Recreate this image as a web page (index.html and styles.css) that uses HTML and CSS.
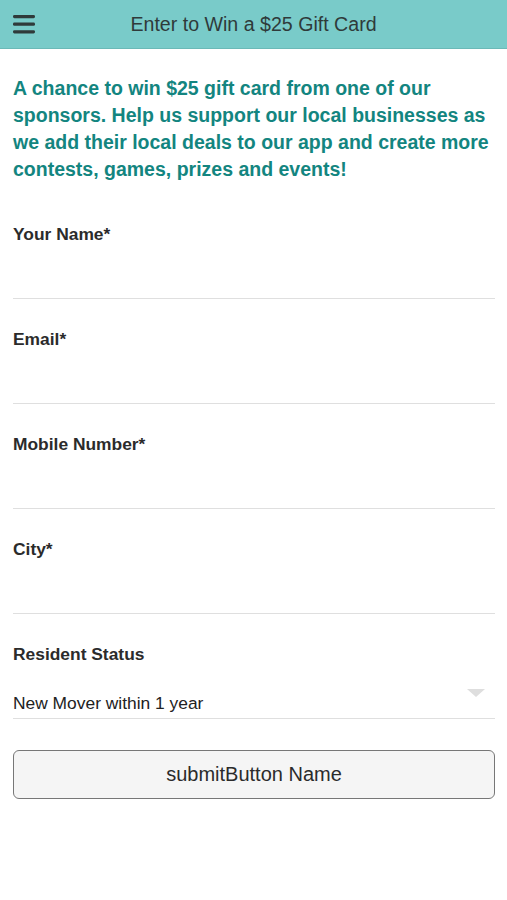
FILE: index.html
```html
<!DOCTYPE html>
<html lang="en">
<head>
  <meta charset="UTF-8">
  <meta name="viewport" content="width=device-width, initial-scale=1.0">
  <title>Enter to Win a $25 Gift Card</title>
  <link rel="stylesheet" href="styles.css">
</head>
<body>
  <header class="topbar">
    <button class="menu" aria-label="Menu">
      <svg width="22" height="19" viewBox="0 0 22 19">
        <rect x="0" y="0" width="22" height="3.2" rx="1.4" fill="#2f3a3a" />
        <rect x="0" y="7.6" width="22" height="3.2" rx="1.4" fill="#2f3a3a" />
        <rect x="0" y="15.2" width="22" height="3.2" rx="1.4" fill="#2f3a3a" />
      </svg>
    </button>
    <h1 class="topbar-title">Enter to Win a $25 Gift Card</h1>
  </header>

  <main class="content">
    <p class="intro">A chance to win $25 gift card from one of our sponsors. Help us support our local businesses as we add their local deals to our app and create more contests, games, prizes and events!</p>

    <form class="entry-form">
      <label class="field">
        <span class="field-label">Your Name*</span>
        <input type="text" class="field-input">
      </label>
      <label class="field">
        <span class="field-label">Email*</span>
        <input type="email" class="field-input">
      </label>
      <label class="field">
        <span class="field-label">Mobile Number*</span>
        <input type="tel" class="field-input">
      </label>
      <label class="field">
        <span class="field-label">City*</span>
        <input type="text" class="field-input">
      </label>
      <label class="field field-select">
        <span class="field-label">Resident Status</span>
        <span class="select-wrap">
          <select class="field-input">
            <option>New Mover within 1 year</option>
            <option>Resident 1-5 years</option>
            <option>Resident 5+ years</option>
          </select>
          <span class="select-arrow"></span>
        </span>
      </label>
      <button type="button" class="submit">submitButton Name</button>
    </form>
  </main>
</body>
</html>
```

FILE: styles.css
```css
* {
  box-sizing: border-box;
}

body {
  margin: 0;
  font-family: "Liberation Sans", Arial, sans-serif;
  color: #2b2b2b;
  background: #fff;
}

.topbar {
  height: 49px;
  background: #79cbc9;
  border-bottom: 1px solid #6bb9b7;
  display: flex;
  align-items: center;
  position: relative;
}

.menu {
  appearance: none;
  border: none;
  background: none;
  padding: 0;
  margin: 0 0 0 13px;
  width: 22px;
  height: 19px;
  display: flex;
  cursor: pointer;
}

.topbar-title {
  margin: 0;
  flex: 1;
  text-align: center;
  font-size: 19.6px;
  font-weight: normal;
  color: #2f3a3a;
  padding-right: 35px;
}

.content {
  padding: 0 12px 0 13px;
}

.intro {
  margin: 26px 0 0;
  color: #138580;
  font-weight: bold;
  font-size: 19.5px;
  line-height: 27px;
}

.entry-form {
  margin-top: 41px;
  display: flex;
  flex-direction: column;
}

.field {
  display: flex;
  flex-direction: column;
}

.field + .field {
  margin-top: 30px;
}

.field-label {
  font-weight: bold;
  font-size: 17.4px;
  line-height: 20px;
  color: #2b2b2b;
}

.field-input {
  appearance: none;
  border: none;
  border-bottom: 1px solid #dfdfdf;
  border-radius: 0;
  background: transparent;
  height: 55px;
  padding: 0;
  font-family: inherit;
  font-size: 17.4px;
  color: #222;
  outline: none;
}

.select-wrap {
  position: relative;
  display: flex;
  flex-direction: column;
  margin-top: 20px;
}

.select-wrap .field-input {
  height: 35px;
  padding-top: 4px;
}

.select-arrow {
  position: absolute;
  right: 10px;
  top: 5px;
  width: 0;
  height: 0;
  border-left: 9px solid transparent;
  border-right: 9px solid transparent;
  border-top: 8px solid #dedede;
}

.submit {
  margin-top: 31px;
  height: 49px;
  width: 100%;
  background: #f5f5f5;
  border: 1.5px solid #777;
  border-radius: 6px;
  font-family: inherit;
  font-size: 20px;
  color: #2b2b2b;
  cursor: pointer;
}
```
